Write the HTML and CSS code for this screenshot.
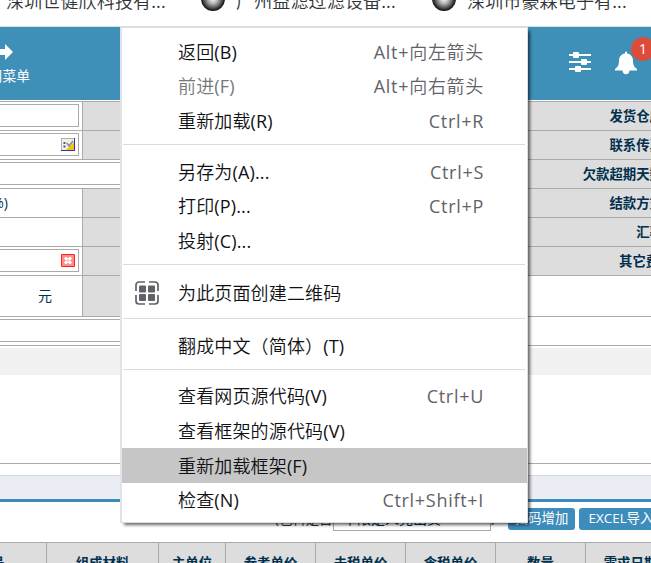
FILE: index.html
```html
<!DOCTYPE html>
<html lang="zh-CN">
<head>
<meta charset="utf-8">
<title>订单</title>
<link rel="stylesheet" href="styles.css">
</head>
<body>
<div class="bookmarks">
  <span class="bookmark first">深圳世健欣科技有...</span>
  <i class="ball"></i><span class="bookmark second">广州益滤过滤设备...</span>
  <i class="ball"></i><span class="bookmark">深圳市豪森电子有...</span>
</div>
<header class="topbar">
  <div class="quick">
    <svg width="26" height="18" viewBox="0 0 26 18"><path d="M0 9l8-8v5h10V1l8 8-8 8v-5H8v5z" fill="#fff"/></svg>
    <span>常用菜单</span>
  </div>
  <div class="tools">
    <svg class="sliders" width="22" height="20" viewBox="0 0 22 20" fill="#fff"><path d="M0 2h22v2H0zM0 9h22v2H0zM0 16h22v2H0z"/><rect x="4" y="0" width="6" height="6" rx="1"/><rect x="12" y="7" width="6" height="6" rx="1"/><rect x="6" y="14" width="6" height="6" rx="1"/></svg>
    <div class="bell">
      <svg width="22" height="24" viewBox="0 0 22 24" fill="#fff"><path d="M10 1.5a1 1 0 0 1 2 0v1c3.800.6 6 3.500 6 7 0 4.500 1.200 6.700 4 8.500v1.500H0V18c2.800-1.800 4-4 4-8.500 0-3.500 2.200-6.400 6-7zM7.500 19.500h7c0 2-1.500 3.800-3.500 3.800s-3.500-1.800-3.500-3.800z"/></svg>
      <b class="badge">1</b>
    </div>
  </div>
</header>
<main>
  <div class="form">
    <div class="row"><div class="field"><div class="input"></div></div><div class="label">发货仓库</div></div>
    <div class="row"><div class="field"><div class="input">
      <svg width="14" height="13" viewBox="0 0 14 13"><path d="M0 0h14v13H0z" fill="#a8aed8"/><path d="M1 1h12v11H1z" fill="#f2f2d4"/><path d="M13 4v8H5z" fill="#f5c211"/><path d="M2.500 4h2v2h-2zM2.500 7.500h2v2h-2z" fill="#4b58a8"/><path d="M6 5l2 3 4-5" fill="none" stroke="#7c86bc" stroke-width="1.500"/><path d="M13.500 0v12.500H0" fill="none" stroke="#3038a0"/></svg>
    </div></div><div class="label">联系传真</div></div>
    <div class="row"><div class="field wide"><div class="input"></div></div><div class="label">欠款超期天数</div></div>
    <div class="row"><div class="field"><span class="unit percent">(%)</span></div><div class="label">结款方式</div></div>
    <div class="row"><div class="field"></div><div class="label">汇率</div></div>
    <div class="row"><div class="field"><div class="input">
      <svg width="14" height="13" viewBox="0 0 14 13"><path d="M.5.5h13v12H.5z" fill="#ff8b8b" stroke="#f22"/><path d="M4 3.500l6 6M10 3.500l-6 6" stroke="#fff" stroke-width="3"/><path d="M7 5v3M5.500 6.500h3" stroke="#fbb"/></svg>
    </div></div><div class="label">其它费:</div></div>
    <div class="row tall"><div class="field"><span class="unit">元</span></div><div class="label half"></div></div>
    <div class="row remark"><div class="field wide"><div class="input"></div></div></div>
  </div>
  <div class="strip"></div>
  <div class="blank"></div>
  <div class="panel-head"></div>
  <div class="actions">
    <span class="hint">(包料是否</span><span class="select">不限是人完出货</span><span class="close">)</span>
    <span class="button">扫码增加</span><span class="button excel">EXCEL导入</span>
  </div>
  <div class="table">
    <span>料号</span><span>组成材料</span><span>主单位</span><span>参考单价</span><span>未税单价</span><span>含税单价</span><span>数量</span><span>需求日期</span>
  </div>
</main>
<nav class="menu">
  <div class="group g1">
    <div class="item"><span>返回(B)</span><kbd>Alt+向左箭头</kbd></div>
    <div class="item off"><span>前进(F)</span><kbd>Alt+向右箭头</kbd></div>
    <div class="item"><span>重新加载(R)</span><kbd>Ctrl+R</kbd></div>
  </div>
  <div class="group g2">
    <div class="item"><span>另存为(A)...</span><kbd>Ctrl+S</kbd></div>
    <div class="item"><span>打印(P)...</span><kbd>Ctrl+P</kbd></div>
    <div class="item"><span>投射(C)...</span></div>
  </div>
  <div class="group g3">
    <div class="item">
      <svg class="qr" width="24" height="24" viewBox="0 0 24 24"><path d="M10 1H4a3 3 0 0 0-3 3v6M14 1h6a3 3 0 0 1 3 3v6M1 14v6a3 3 0 0 0 3 3h6M23 14v6a3 3 0 0 1-3 3h-6" fill="none" stroke="#5f6368" stroke-width="1.700"/><g fill="#5f6368"><rect x="4" y="4.500" width="7" height="7" rx="1"/><rect x="13" y="4.500" width="7" height="7" rx="1"/><rect x="4" y="13" width="7" height="7" rx="1"/><rect x="13" y="13" width="7" height="7" rx="1"/></g></svg>
      <span>为此页面创建二维码</span></div>
  </div>
  <div class="group g4">
    <div class="item"><span>翻成中文（简体）(T)</span></div>
  </div>
  <div class="group g5">
    <div class="item"><span>查看网页源代码(V)</span><kbd>Ctrl+U</kbd></div>
    <div class="item"><span>查看框架的源代码(V)</span></div>
    <div class="item active"><span>重新加载框架(F)</span></div>
    <div class="item"><span>检查(N)</span><kbd>Ctrl+Shift+I</kbd></div>
  </div>
</nav>
</body>
</html>
```
FILE: styles.css
```css
* { box-sizing: border-box; }
html, body { height: 563px; overflow: hidden; }
body {
  margin: 0;
  background: #fff;
  position: relative;
  font: 13.4px/20px "Open Sans", "Noto Sans CJK SC", sans-serif;
  color: #00304d;
}
svg { display: block; flex: none; }
.bookmarks {
  height: 27px;
  display: flex;
  align-items: flex-start;
  border-bottom: 1px solid #dadce0;
  white-space: nowrap;
  padding-left: 6px;
  font-size: 18px;
  font-family: "Open Sans", "Noto Sans CJK SC DemiLight", "Noto Sans CJK SC Light", "Noto Sans CJK SC", sans-serif;
  color: #303438;
}
.bookmark { width: 195px; flex: none; margin-top: -11px; line-height: 24px; letter-spacing: .15px; }
.bookmark.second { width: 196px; }
.ball {
  width: 24px;
  height: 24px;
  flex: none;
  margin: -13px 11px 0 0;
  border-radius: 50%;
  background: radial-gradient(circle at 50% 50%, #fff 0, #aaa 30%, #222 65%, #000 75%);
}
.topbar {
  height: 73px;
  width: 651px;
  background: #3e90b9;
  display: flex;
  justify-content: space-between;
  color: #fff;
}
.quick {
  width: 55px;
  margin-left: -25px;
  padding-top: 16px;
  display: flex;
  flex-direction: column;
  align-items: center;
  font-size: 13.8px;
}
.quick svg { margin-right: 5px; }
.quick span { white-space: nowrap; margin-top: 5px; }
.tools { display: flex; gap: 24px; padding: 24px 14px 0 0; }
.sliders { margin-top: 1px; }
.bell { position: relative; height: 24px; }
.badge {
  position: absolute;
  left: 16px;
  top: -14px;
  width: 24px;
  height: 24px;
  border-radius: 50%;
  background: #dd4b39;
  text-align: center;
  font: 14px/23px "Open Sans", sans-serif;
}
.form { padding-top: 1px; width: 663px; border-bottom: 1px solid #aaa; }
.row { display: flex; height: 29px; border-top: 1px solid #aaa; }
.row.tall { height: 41px; }
.field {
  width: 83px;
  flex: none;
  border-right: 1px solid #aaa;
  padding: 2px 3px 3px 0;
  display: flex;
  align-items: center;
}
.field.wide { width: 320px; }
.remark .field.wide { border-right: 0; }
.input {
  width: 100%;
  height: 23px;
  border: 1px solid #aaa;
  border-left: 0;
  display: flex;
  justify-content: flex-end;
  align-items: center;
  padding-right: 3px;
}
.unit { font-size: 14px; margin-left: 38px; }
.unit.percent { margin-left: -12px; }
.label {
  flex: 1;
  background: #ddd;
  font-weight: 700;
  text-align: right;
  line-height: 28px;
}
.label.half { flex: 0 0 200px; }
.strip { height: 27px; margin-top: 2px; background: #f1f1f1; }
.blank { height: 89px; border-bottom: 1px solid #aaa; }
.panel-head {
  height: 27px;
  margin-top: 11px;
  border-top: 1px solid #d2d6de;
  border-bottom: 3px solid #3c8dbc;
  background: #eaedf3;
}
.actions {
  height: 40px;
  display: flex;
  align-items: flex-start;
  padding: 6px 0 0 275px;
  white-space: nowrap;
}
.hint { width: 58px; color: #333; flex: none; line-height: 22px; }
.select {
  width: 158px;
  height: 23px;
  flex: none;
  border: 1px solid #aaa;
  padding-left: 9px;
  line-height: 19px;
  font-size: 14px;
}
.close { width: 17px; flex: none; }
.button {
  width: 67px;
  height: 22px;
  flex: none;
  border-radius: 3px;
  background: #3c8dbc;
  color: #fff;
  text-align: center;
  line-height: 21px;
  margin-right: 4px;
}
.button.excel { width: 84px; }
.table {
  display: grid;
  grid-template-columns: 47px 112px 67px 90px 90px 90px 90px 90px;
  border-top: 1px solid #aaa;
  background: #ddd;
  height: 40px;
  font-weight: 700;
  line-height: 41px;
  text-align: center;
}
.table span { border-right: 1px solid #aaa; }
.table span:first-child { text-indent: -64px; }

.menu {
  position: absolute;
  left: 120px;
  top: 27px;
  width: 408px;
  height: 496px;
  background: #fff;
  border: 1px solid #dcdde2;
  border-left: 2px solid #e2e3e8;
  box-shadow: 3px 3px 3px -1px rgba(0, 0, 0, .6);
  font-size: 18px;
  font-family: "Open Sans", "Noto Sans CJK SC DemiLight", "Noto Sans CJK SC Light", "Noto Sans CJK SC", sans-serif;
  letter-spacing: .15px;
  color: #101114;
}
.group { border-bottom: 1px solid #dadada; margin: 0 2px 0 1px; }
.g1 { height: 117px; padding-top: 6px; }
.g2 { height: 120px; padding-top: 9px; }
.g3 { height: 54px; padding-top: 10px; }
.g4 { height: 51px; padding-top: 9.5px; }
.g5 { border-bottom: 0; padding-top: 8.5px; }
.item {
  height: 34.5px;
  margin: 0 -2px 0 -1px;
  padding: 1px 43px 0 56px;
  display: flex;
  align-items: center;
  white-space: nowrap;
  line-height: 32px;
}
.item kbd { font: inherit; letter-spacing: .7px; margin-left: auto; color: #5f6368; }
.off { color: #74787c; }
.active { background: #c6c6c6; height: 35px; }
.qr { margin: 0 19px 0 -43px; }
```
